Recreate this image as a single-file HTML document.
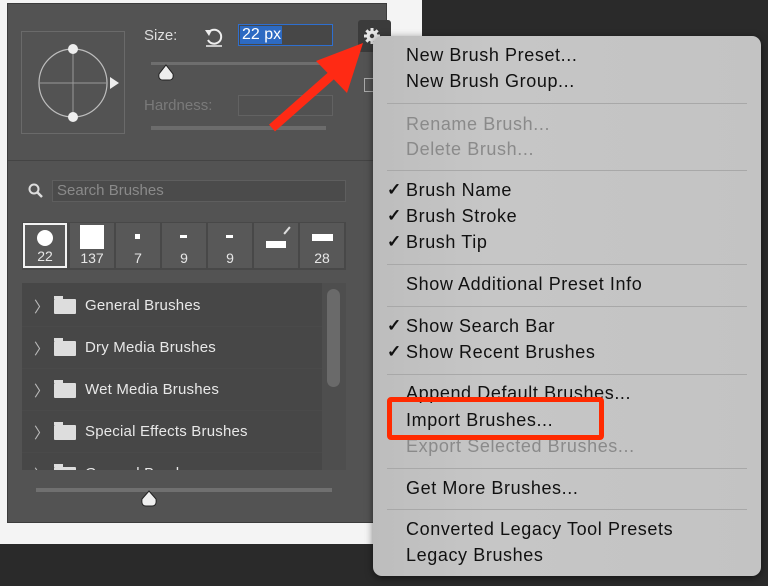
<!DOCTYPE html>
<html><head><meta charset="utf-8"><style>
*{margin:0;padding:0;box-sizing:border-box}
body{width:768px;height:586px;overflow:hidden;background:#2a2a2a;position:relative;font-family:"Liberation Sans",Helvetica,sans-serif}
.abs{position:absolute}
.menu{position:absolute;left:373px;top:36px;width:388px;height:540px;background:linear-gradient(90deg,#bdbdbd,#c6c6c6 30%,#c3c3c3);border-radius:9px;box-shadow:0 2px 8px rgba(0,0,0,.5)}
.mi{position:absolute;left:33px;font-size:18px;letter-spacing:0.6px;color:#111;line-height:20px;white-space:nowrap}
.dis{color:#8a8a8a}
.ck{position:absolute;left:-19px;top:0;font-size:17px;font-weight:bold;letter-spacing:0}
.sep{position:absolute;left:14px;right:14px;height:1px;background:#a8a8a8}
.tile{position:absolute;top:223px;width:44px;height:45px;background:#585858;color:#e6e6e6;font-size:14px;text-align:center}
.tile span{position:absolute;bottom:2px;left:0;right:0}
.row{position:absolute;left:22px;width:304px;height:42px;color:#e8e8e8;font-size:15px;letter-spacing:0.2px;border-bottom:1px solid #4a4a4a}
.row .t{position:absolute;left:63px;top:12px}
.row .ch{position:absolute;left:12px;top:11px;color:#bbb;font-size:15px}
.row .f{position:absolute;left:32px;top:14px;width:22px;height:15px;background:#ddd;border-radius:1px}
.row .f:before{content:"";position:absolute;left:0;top:-3px;width:9px;height:3px;background:#ddd}
</style></head><body>
<div class="abs" style="left:0;top:0;width:422px;height:544px;background:#f4f4f4"></div>
<div class="abs" style="left:7px;top:3px;width:380px;height:520px;background:#535353;border:1px solid #3c3c3c"></div>
<div class="abs" style="left:8px;top:160px;width:380px;height:1px;background:#444"></div>
<div class="abs" style="left:21px;top:31px;width:104px;height:103px;border:1px solid #6a6a6a"></div>
<svg class="abs" style="left:21px;top:31px" width="110" height="104">
<circle cx="52" cy="52" r="34" fill="none" stroke="#bdbdbd" stroke-width="1.2"/>
<line x1="52" y1="18" x2="52" y2="86" stroke="#999"/><line x1="18" y1="52" x2="86" y2="52" stroke="#999"/>
<circle cx="52" cy="18" r="5" fill="#eee"/><circle cx="52" cy="86" r="5" fill="#eee"/>
<polygon points="89,46 98,52 89,58" fill="#eee"/></svg>
<div class="abs" style="left:144px;top:27px;color:#ddd;font-size:15px">Size:</div>
<svg class="abs" style="left:203px;top:26px" width="22" height="22"><path d="M6 6 A7 7 0 1 1 5 14" fill="none" stroke="#eee" stroke-width="2"/><polygon points="2,4 9,4 6,10" fill="#eee"/><line x1="3" y1="20" x2="19" y2="20" stroke="#eee" stroke-width="1.5"/></svg>
<div class="abs" style="left:238px;top:24px;width:95px;height:22px;border:1px solid #2e6fd0;background:#474747"></div>
<div class="abs" style="left:240px;top:26px;width:42px;height:18px;background:#2d6ac2;color:#fff;font-size:16px;line-height:18px;padding-left:2px">22 px</div>
<div class="abs" style="left:151px;top:62px;width:177px;height:3px;background:#6e6e6e"></div>
<svg class="abs" style="left:157px;top:64px" width="20" height="18"><path d="M9 1 L16 10 Q17 16 12 16 L6 16 Q1 16 2 10 Z" fill="#eee" stroke="#222"/></svg>
<div class="abs" style="left:144px;top:97px;color:#7a7a7a;font-size:15px">Hardness:</div>
<div class="abs" style="left:238px;top:95px;width:95px;height:21px;border:1px solid #626262;background:#515151"></div>
<div class="abs" style="left:151px;top:126px;width:175px;height:4px;background:#6c6c6c"></div>
<div class="abs" style="left:358px;top:20px;width:33px;height:32px;background:#3b3b3b;border-radius:3px"></div>
<svg class="abs" style="left:363px;top:27px" width="18" height="18"><g fill="#e6e6e6"><circle cx="9" cy="9" r="5.5"/><rect x="7.5" y="1" width="3" height="16"/><rect x="1" y="7.5" width="16" height="3"/><rect x="7.5" y="1" width="3" height="16" transform="rotate(45 9 9)"/><rect x="7.5" y="1" width="3" height="16" transform="rotate(-45 9 9)"/></g><circle cx="9" cy="9" r="2.2" fill="#3b3b3b"/></svg>
<div class="abs" style="left:364px;top:78px;width:12px;height:14px;border:1px solid #aaa"></div>
<svg class="abs" style="left:28px;top:183px" width="16" height="16"><circle cx="6" cy="6" r="4.5" fill="none" stroke="#ddd" stroke-width="2"/><line x1="9.5" y1="9.5" x2="14" y2="14" stroke="#ddd" stroke-width="2.5"/></svg>
<div class="abs" style="left:52px;top:180px;width:294px;height:22px;background:#4b4b4b;border:1px solid #5e5e5e;color:#8a8a8a;font-size:15px;line-height:20px;padding-left:4px">Search Brushes</div>
<div class="abs" style="left:22px;top:222px;width:324px;height:48px;background:#484848"></div>
<div class="tile" style="left:23px;border:2px solid #f2f2f2"><div class="abs" style="left:12px;top:5px;width:16px;height:16px;border-radius:50%;background:#fff"></div><span>22</span></div>
<div class="tile" style="left:70px"><div class="abs" style="left:10px;top:2px;width:24px;height:24px;background:#fff"></div><span>137</span></div>
<div class="tile" style="left:116px"><div class="abs" style="left:19px;top:11px;width:5px;height:5px;background:#fff"></div><span>7</span></div>
<div class="tile" style="left:162px"><div class="abs" style="left:18px;top:12px;width:7px;height:3px;background:#fff"></div><span>9</span></div>
<div class="tile" style="left:208px"><div class="abs" style="left:18px;top:12px;width:7px;height:3px;background:#fff"></div><span>9</span></div>
<div class="tile" style="left:254px"><div class="abs" style="left:12px;top:18px;width:20px;height:7px;background:#fff"></div><div class="abs" style="left:32px;top:3px;width:2px;height:9px;background:#ddd;transform:rotate(40deg)"></div></div>
<div class="tile" style="left:300px"><div class="abs" style="left:12px;top:11px;width:21px;height:7px;background:#fff"></div><span>28</span></div>
<div class="abs" style="left:22px;top:283px;width:324px;height:187px;background:#474747;overflow:hidden">
<div class="row" style="left:0;top:2px"><span class="ch">〉</span><span class="f"></span><span class="t">General Brushes</span></div>
<div class="row" style="left:0;top:44px"><span class="ch">〉</span><span class="f"></span><span class="t">Dry Media Brushes</span></div>
<div class="row" style="left:0;top:86px"><span class="ch">〉</span><span class="f"></span><span class="t">Wet Media Brushes</span></div>
<div class="row" style="left:0;top:128px"><span class="ch">〉</span><span class="f"></span><span class="t">Special Effects Brushes</span></div>
<div class="row" style="left:0;top:170px"><span class="ch">〉</span><span class="f"></span><span class="t">General Brushes</span></div>
<div class="abs" style="left:300px;top:0;width:24px;height:187px;background:#4e4e4e"></div>
<div class="abs" style="left:305px;top:6px;width:13px;height:98px;background:#6a6a6a;border-radius:7px"></div>
</div>
<div class="abs" style="left:36px;top:488px;width:296px;height:4px;background:#707070"></div>
<svg class="abs" style="left:140px;top:490px" width="20" height="18"><path d="M9 1 L16 9 Q17 16 12 16 L6 16 Q1 16 2 9 Z" fill="#eee" stroke="#222"/></svg>
<svg class="abs" style="left:0;top:0" width="400" height="160"><line x1="272" y1="128" x2="332" y2="75" stroke="#ff2a14" stroke-width="9"/><polygon points="363,43 316,61 347,93" fill="#ff2a14"/></svg>
<div class="menu">
<div class="mi" style="top:9px">New Brush Preset...</div>
<div class="mi" style="top:35px">New Brush Group...</div>
<div class="sep" style="top:67px"></div>
<div class="mi dis" style="top:78px">Rename Brush...</div>
<div class="mi dis" style="top:103px">Delete Brush...</div>
<div class="sep" style="top:134px"></div>
<div class="mi" style="top:144px"><span class="ck">✓</span>Brush Name</div>
<div class="mi" style="top:170px"><span class="ck">✓</span>Brush Stroke</div>
<div class="mi" style="top:196px"><span class="ck">✓</span>Brush Tip</div>
<div class="sep" style="top:228px"></div>
<div class="mi" style="top:238px">Show Additional Preset Info</div>
<div class="sep" style="top:270px"></div>
<div class="mi" style="top:280px"><span class="ck">✓</span>Show Search Bar</div>
<div class="mi" style="top:306px"><span class="ck">✓</span>Show Recent Brushes</div>
<div class="sep" style="top:338px"></div>
<div class="mi" style="top:347px">Append Default Brushes...</div>
<div class="mi" style="top:374px">Import Brushes...</div>
<div class="mi dis" style="top:400px">Export Selected Brushes...</div>
<div class="sep" style="top:432px"></div>
<div class="mi" style="top:442px">Get More Brushes...</div>
<div class="sep" style="top:473px"></div>
<div class="mi" style="top:483px">Converted Legacy Tool Presets</div>
<div class="mi" style="top:509px">Legacy Brushes</div>
</div>
<div class="abs" style="left:387px;top:397px;width:217px;height:43px;border:5px solid #ff2a00;border-radius:4px"></div>
</body></html>
